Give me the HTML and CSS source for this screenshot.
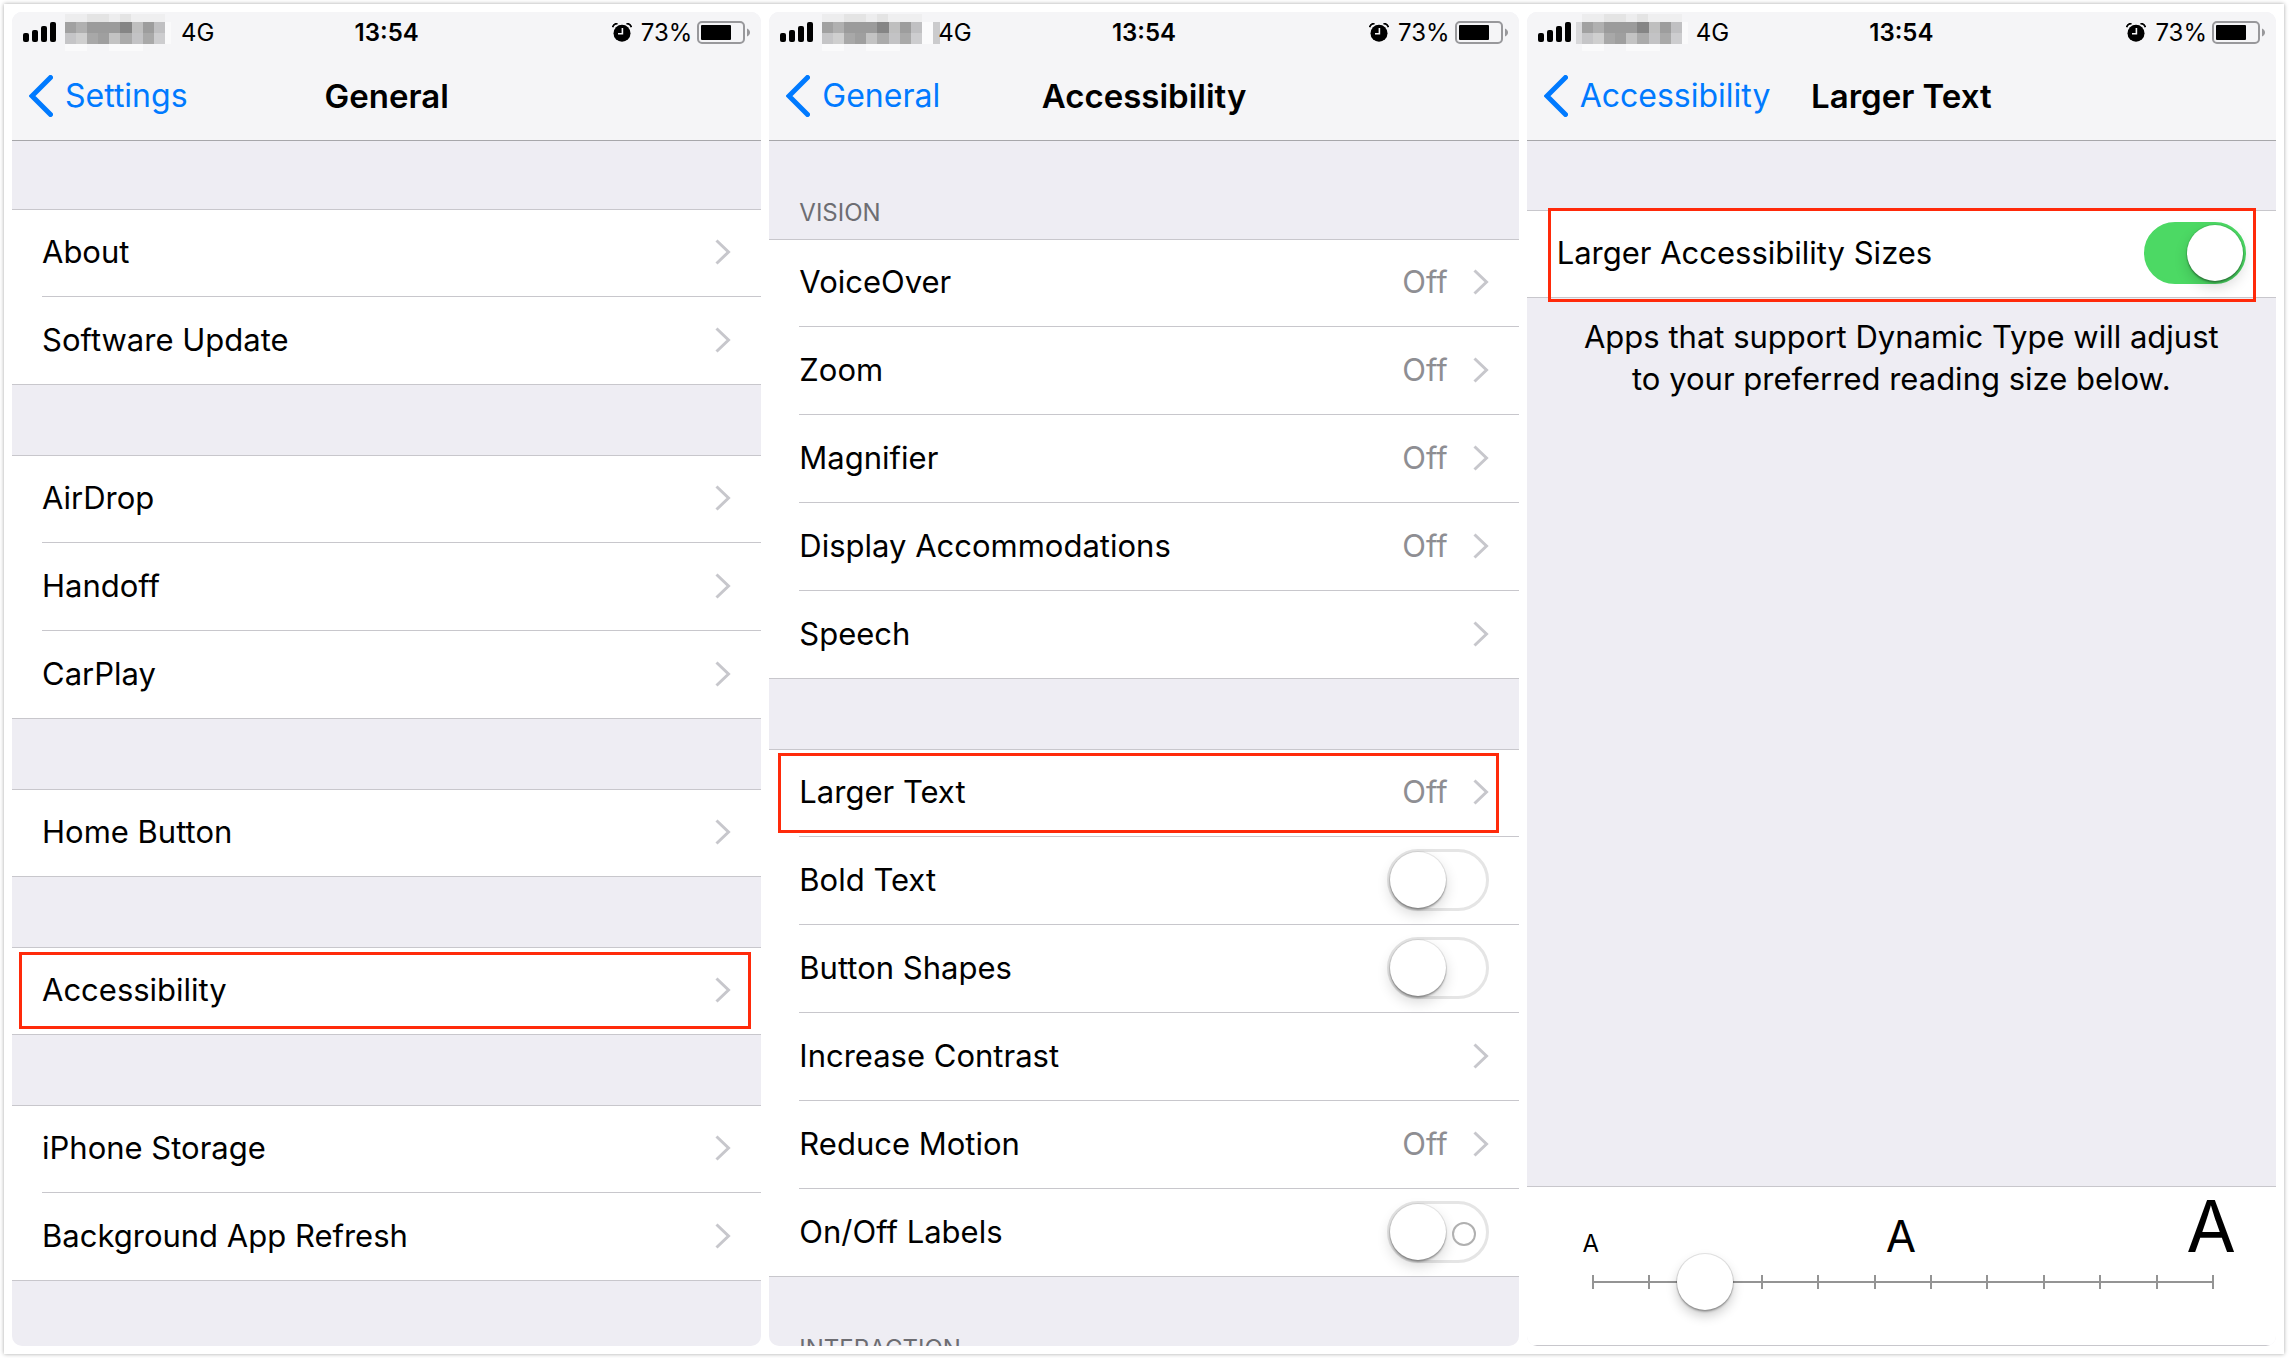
FILE: index.html
```
<!DOCTYPE html>
<html lang="en">
<head>
<meta charset="utf-8">
<title>Larger Text settings</title>
<link rel="stylesheet" href="styles.css">
</head>
<body>
<svg class="defs" aria-hidden="true">
  <symbol id="signal" viewBox="0 0 33 20"><rect y="11" width="6" height="9" rx="2"/><rect x="9" y="8" width="6" height="12" rx="2"/><rect x="18" y="4" width="6" height="16" rx="2"/><rect x="27" width="6" height="20" rx="2"/></symbol>
  <symbol id="mosaic" viewBox="0 0 117 37">
    <g fill="#ededee"><path d="M0 0h22v8H0zM44 0h11v8H44z"/></g>
    <path fill="#e4e4e4" d="M22 0h22v8H22zM55 0h11v8H55z"/><path fill="#efeff0" d="M66 0h34v8H66z"/>
    <path fill="#a1a1a1" d="M0 8h11v11H0z"/><path fill="#b0b0b0" d="M11 8h11v11H11z"/><path fill="#9b9b9b" d="M22 8h33v11H22z"/><path fill="#858585" d="M55 8h12v11H55z"/><path fill="#bfbfbf" d="M67 8h11v11H67z"/><path fill="#9d9d9d" d="M78 8h11v11H78z"/><path fill="#c0c0c2" d="M89 8h11v11H89z"/>
    <path fill="#c5c5c7" d="M0 19h11v11H0z"/><path fill="#cfcfcf" d="M11 19h11v11H11z"/><path fill="#a8a8a8" d="M22 19h11v11H22z"/><path fill="#9f9f9f" d="M33 19h11v11H33z"/><path fill="#c3c3c3" d="M44 19h11v11H44z"/><path fill="#ababab" d="M55 19h12v11H55z"/><path fill="#c3c3c5" d="M67 19h11v11H67z"/><path fill="#a9a9a9" d="M78 19h11v11H78z"/><path fill="#cdcdcf" d="M89 19h11v11H89z"/>
    <path fill="#fafafb" d="M0 30h22v7H0zM44 30h34v7H44zM100 8h6v22h-6z"/>
  </symbol>
  <symbol id="alarm" viewBox="0 0 20 19"><circle cx="10" cy="10.200000" r="8.500000"/><path d="M.6 4.200000A5 5 0 0 1 5.600000 .6M14.400000 .6a5 5 0 0 1 5 3.600000" fill="none" stroke="#000" stroke-width="1.800000"/><path d="M10.400000 5v5.800000H6" fill="none" stroke="#f5f5f7" stroke-width="1.600000"/></symbol>
  <symbol id="battery" viewBox="0 0 53 23"><rect x="1" y="1" width="46" height="21" rx="4" fill="none" stroke="#98989b" stroke-width="2"/><rect x="4" y="4" width="30" height="15" rx="1"/><path d="M50 7.500000c4 1.500000 4 6.500000 0 8z" fill="#98989b"/></symbol>
  <symbol id="back" viewBox="0 0 24 42"><path d="M21.500000 2.500000 3 21l18.500000 18.500000" fill="none" stroke="#007aff" stroke-width="5" stroke-linecap="round" stroke-linejoin="miter"/></symbol>
  <symbol id="more" viewBox="0 0 16 26"><path d="M1.500000 1.500000 13.500000 13 1.500000 24.500000" fill="none" stroke="#c7c7cc" stroke-width="3"/></symbol>
</svg>

<main class="board">
  <section class="phone">
    <header class="top">
      <div class="status">
        <div class="carrier"><svg class="signal"><use href="#signal"/></svg><svg class="mask" viewBox="0 0 122 37"><use href="#mosaic" x="4" width="117" height="37"/></svg><span>4G</span></div>
        <time class="clock">13:54</time>
        <div class="power"><svg class="alarm"><use href="#alarm"/></svg><span>73%</span><svg class="battery"><use href="#battery"/></svg></div>
      </div>
      <nav class="nav"><a class="back" href="#settings"><svg><use href="#back"/></svg><span>Settings</span></a><h1>General</h1></nav>
    </header>
    <div class="list">
      <div class="group">
        <a class="row" href="#about"><span class="name">About</span><svg class="more"><use href="#more"/></svg></a>
        <a class="row" href="#update"><span class="name">Software Update</span><svg class="more"><use href="#more"/></svg></a>
      </div>
      <div class="group">
        <a class="row" href="#airdrop"><span class="name">AirDrop</span><svg class="more"><use href="#more"/></svg></a>
        <a class="row" href="#handoff"><span class="name">Handoff</span><svg class="more"><use href="#more"/></svg></a>
        <a class="row" href="#carplay"><span class="name">CarPlay</span><svg class="more"><use href="#more"/></svg></a>
      </div>
      <div class="group">
        <a class="row" href="#home"><span class="name">Home Button</span><svg class="more"><use href="#more"/></svg></a>
      </div>
      <div class="group">
        <a class="row" href="#accessibility"><span class="name">Accessibility</span><svg class="more"><use href="#more"/></svg><span class="mark mark-menu"></span></a>
      </div>
      <div class="group">
        <a class="row" href="#storage"><span class="name">iPhone Storage</span><svg class="more"><use href="#more"/></svg></a>
        <a class="row" href="#refresh"><span class="name">Background App Refresh</span><svg class="more"><use href="#more"/></svg></a>
      </div>
    </div>
  </section>

  <section class="phone" id="accessibility">
    <header class="top">
      <div class="status">
        <div class="carrier"><svg class="signal"><use href="#signal"/></svg><svg class="mask" viewBox="0 0 122 37"><use href="#mosaic" x="4" width="117" height="37"/><path fill="#fbfbfc" d="M104 8h11v22h-11z"/><path fill="#cbcbcd" d="M115 8h7v22h-7z"/></svg><span>4G</span></div>
        <time class="clock">13:54</time>
        <div class="power"><svg class="alarm"><use href="#alarm"/></svg><span>73%</span><svg class="battery"><use href="#battery"/></svg></div>
      </div>
      <nav class="nav"><a class="back" href="#general"><svg><use href="#back"/></svg><span>General</span></a><h1>Accessibility</h1></nav>
    </header>
    <div class="list titled">
      <h2>VISION</h2>
      <div class="group">
        <a class="row" href="#voiceover"><span class="name">VoiceOver</span><span class="value">Off</span><svg class="more"><use href="#more"/></svg></a>
        <a class="row" href="#zoom"><span class="name">Zoom</span><span class="value">Off</span><svg class="more"><use href="#more"/></svg></a>
        <a class="row" href="#magnifier"><span class="name">Magnifier</span><span class="value">Off</span><svg class="more"><use href="#more"/></svg></a>
        <a class="row" href="#display"><span class="name">Display Accommodations</span><span class="value">Off</span><svg class="more"><use href="#more"/></svg></a>
        <a class="row" href="#speech"><span class="name">Speech</span><svg class="more"><use href="#more"/></svg></a>
      </div>
      <div class="group">
        <a class="row" href="#larger"><span class="name">Larger Text</span><span class="value">Off</span><svg class="more"><use href="#more"/></svg><span class="mark mark-text"></span></a>
        <label class="row"><span class="name">Bold Text</span><input class="switch" type="checkbox"></label>
        <label class="row"><span class="name">Button Shapes</span><input class="switch" type="checkbox"></label>
        <a class="row" href="#contrast"><span class="name">Increase Contrast</span><svg class="more"><use href="#more"/></svg></a>
        <a class="row" href="#motion"><span class="name">Reduce Motion</span><span class="value">Off</span><svg class="more"><use href="#more"/></svg></a>
        <label class="row"><span class="name">On/Off Labels</span><input class="switch labelled" type="checkbox"></label>
      </div>
      <h2>INTERACTION</h2>
    </div>
  </section>

  <section class="phone" id="larger">
    <header class="top">
      <div class="status">
        <div class="carrier"><svg class="signal"><use href="#signal"/></svg><svg class="mask" viewBox="0 0 122 37"><path fill="#d8d8da" d="M0 8h6v22H0z"/><use href="#mosaic" x="6" width="117" height="37"/></svg><span>4G</span></div>
        <time class="clock">13:54</time>
        <div class="power"><svg class="alarm"><use href="#alarm"/></svg><span>73%</span><svg class="battery"><use href="#battery"/></svg></div>
      </div>
      <nav class="nav"><a class="back" href="#accessibility"><svg><use href="#back"/></svg><span>Accessibility</span></a><h1>Larger Text</h1></nav>
    </header>
    <div class="list single">
      <div class="group">
        <label class="row"><span class="name">Larger Accessibility Sizes</span><input class="switch" type="checkbox" checked><span class="mark mark-sizes"></span></label>
      </div>
      <p class="note">Apps that support Dynamic Type will adjust<br>to your preferred reading size below.</p>
    </div>
    <footer class="sizer">
      <div class="letters" aria-hidden="true"><span class="small">A</span><span class="medium">A</span><span class="large">A</span></div>
      <div class="scale">
        <div class="ticks"><i></i><i></i><i></i><i></i><i></i><i></i><i></i><i></i><i></i><i></i><i></i><i></i></div>
        <input class="slider" type="range" min="0" max="11" value="2" aria-label="Text size">
      </div>
    </footer>
  </section>
</main>
</body>
</html>
```
FILE: styles.css
```
* { box-sizing: border-box; }

body {
  margin: 0;
  padding: 4px 5px 4px 4px;
  background: #fff;
  color: #000;
  font-family: Inter, "Liberation Sans", sans-serif;
  font-size: 31px;
  line-height: 42px;
}

a { color: inherit; text-decoration: none; }
h1, h2, p { margin: 0; }
svg { display: block; flex: none; }
.defs { position: absolute; width: 0; height: 0; }

.board {
  display: grid;
  grid-template-columns: repeat(3, minmax(0, 1fr));
  grid-template-rows: minmax(0, 1fr);
  gap: 8px;
  height: calc(100vh - 8px);
  padding: 8px;
  background: #fff;
  box-shadow: 0 0 4px rgba(0, 0, 0, .35);
}

.phone {
  display: flex;
  flex-direction: column;
  overflow: hidden;
  border-radius: 10px;
  background: #eeedf3;
}

/* Status and navigation bars */
.top {
  flex: none;
  background: #f5f5f7;
  border-bottom: 1px solid #a7a7aa;
}
.status {
  display: grid;
  grid-template-columns: 1fr auto 1fr;
  align-items: center;
  height: 40px;
  padding: 0 11px;
  font-size: 24px;
  line-height: 32px;
}
.carrier, .power { display: flex; align-items: center; }
.carrier { gap: 5px; }
.carrier span { margin-left: -7px; }
.carrier span, .power span, .clock { padding-top: 2px; }
.power { justify-content: flex-end; gap: 5px; }
.clock { font-weight: 600; }
.signal { width: 33px; height: 20px; }
.mask { width: 122px; height: 37px; }
.alarm { width: 20px; height: 19px; margin-right: 4px; }
.battery { width: 53px; height: 23px; }

.nav {
  display: grid;
  grid-template-columns: 1fr auto 1fr;
  align-items: center;
  height: 88px;
  padding: 0 17px;
}
.nav h1 { font-size: 33px; font-weight: 600; line-height: 42px; }
.back {
  display: flex;
  align-items: center;
  gap: 12px;
  color: #007aff;
  font-size: 32px;
}
.back svg { width: 24px; height: 42px; }

/* Grouped rows */
.list {
  display: flex;
  flex: none;
  flex-direction: column;
  gap: 70px;
  padding-top: 68px;
}
.titled { gap: 0; padding-top: 0; }
.single { padding-top: 69px; }
.titled h2 {
  height: 98px;
  padding: 56px 30px 0;
  color: #6d6d72;
  font-size: 24px;
  font-weight: 400;
  line-height: 32px;
}
.titled .group + .group { margin-top: 70px; }
.group {
  background: #fff;
  border-top: 1px solid #c8c7cc;
  border-bottom: 1px solid #c8c7cc;
}
.row {
  position: relative;
  display: flex;
  align-items: center;
  height: 87px;
  margin-left: 30px;
  padding: 0 30px 2px 0;
}
.row:first-child { height: 86px; }
.row + .row { height: 88px; border-top: 1px solid #c8c7cc; }
.name { flex: 1; }
.value { margin-right: 25px; color: #8e8e93; }
.more { width: 16px; height: 26px; }

.mark { position: absolute; border: 3px solid #ff2a0a; }
.mark-menu { inset: 4px 10px 5px -23px; }
.mark-text { inset: 3px 20px 3px -21px; }
.mark-sizes { inset: -3px 20px -5px -9px; }

.switch {
  position: relative;
  width: 102px;
  height: 62px;
  margin: 0;
  appearance: none;
  border: 3px solid #e5e5e5;
  border-radius: 31px;
  background: #fff;
}
.switch::before {
  content: "";
  position: absolute;
  top: 0;
  left: 0;
  width: 56px;
  height: 56px;
  border-radius: 50%;
  background: #fff;
  box-shadow: 0 0 0 1px rgba(0, 0, 0, .08), 0 2px 2px rgba(0, 0, 0, .3), 0 6px 14px rgba(0, 0, 0, .16);
}
.switch:checked { border-color: #4cd964; background: #4cd964; }
.switch:checked::before { left: 40px; }
.labelled::after {
  content: "";
  position: absolute;
  top: 18px;
  right: 10px;
  width: 20px;
  height: 20px;
  border: 2px solid #b0b0b0;
  border-radius: 50%;
}

.note { margin-top: -52px; text-align: center; }

/* Text size control */
.sizer {
  height: 160px;
  margin-top: auto;
  padding: 12px 35px 0 38px;
  border-top: 1px solid #c8c7cc;
  border-bottom: 1px solid #c8c7cc;
  background: #fff;
}
.letters {
  display: flex;
  align-items: baseline;
  justify-content: space-between;
  height: 54px;
  padding: 0 5px 0 1px;
}
.letters span { width: 50px; text-align: center; line-height: 1; }
.letters .small { font-size: 24px; }
.letters .medium { font-size: 44px; }
.letters .large { font-size: 72px; line-height: 54px; }
.scale { display: grid; align-items: center; height: 58px; }
.ticks, .slider { grid-area: 1 / 1; }
.ticks {
  display: flex;
  align-items: center;
  justify-content: space-between;
  height: 14px;
  margin: 0 27px;
  background: linear-gradient(#949494, #949494) center / 100% 2px no-repeat;
}
.ticks i { width: 2px; height: 14px; background: #949494; }
.slider {
  width: 100%;
  height: 58px;
  margin: 0;
  appearance: none;
  background: none;
}
.slider::-webkit-slider-thumb {
  width: 56px;
  height: 56px;
  appearance: none;
  border: 0;
  border-radius: 50%;
  background: #fff;
  box-shadow: 0 0 0 1px rgba(0, 0, 0, .1), 0 2px 2px rgba(0, 0, 0, .25), 0 6px 12px rgba(0, 0, 0, .2);
}
```
